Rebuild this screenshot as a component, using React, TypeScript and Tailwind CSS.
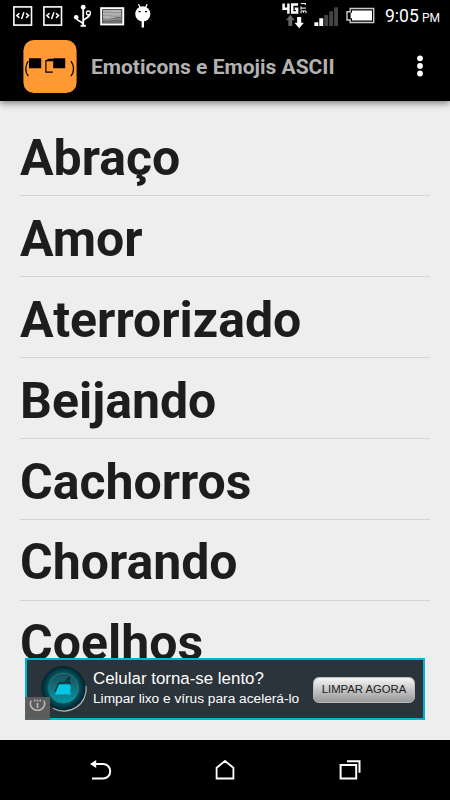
const categories = ['Abraço', 'Amor', 'Aterrorizado', 'Beijando', 'Cachorros', 'Chorando', 'Coelhos'];

function CodeIcon() {
  return (
    <svg width="20" height="20" viewBox="0 0 20 20" fill="none" stroke="#fff">
      <rect x=".9" y=".9" width="17.6" height="18.2" strokeWidth="1.6" />
      <path d="M6.4 7.2 3.8 9.6l2.6 2.3M13 7.2l2.6 2.4-2.6 2.3M10.9 6.2 8.6 13" strokeWidth="1.5" />
    </svg>
  );
}

function UsbIcon() {
  return (
    <svg width="20" height="24" viewBox="0 0 20 24" fill="none" stroke="#fff" strokeWidth="1.8">
      <path d="M10.2 3v18M10.2 20.5C9.5 16.5 3.7 18 3.2 13.5M10.2 17c.8-3 6.6-2.8 6.5-7" />
      <circle cx="10.2" cy="3.2" r="2.4" fill="#fff" stroke="none" />
      <circle cx="3.2" cy="13.2" r="2.3" fill="#fff" stroke="none" />
      <circle cx="15.4" cy="9" r="2" strokeWidth="1.3" />
      <path d="M7.6 21.8h5.2" strokeWidth="2" />
    </svg>
  );
}

function PictureIcon() {
  return (
    <svg width="25" height="19" viewBox="0 0 25 19" fill="none">
      <rect x="1.2" y="1.2" width="22" height="16.2" fill="#222" stroke="#fff" strokeWidth="2" />
      <rect x="3" y="3" width="18.4" height="12.6" fill="#b2b2b2" />
      <path d="M3 5.2c6-.8 12 1.8 18.4 0M3 8.4c6-.8 12 2.2 18.4.2" stroke="#888" strokeWidth=".8" />
      <path d="M3 11.2c7 2.4 12-2.4 18.4-.8v5.2H3z" fill="#6c6c6c" />
      <path d="M3 12.8c7 1 12-1.6 18.4-.8" stroke="#aaa" strokeWidth=".8" />
    </svg>
  );
}

function DroidIcon() {
  return (
    <svg width="16" height="24" viewBox="0 0 16 24" fill="#fff">
      <path d="M3.5.2 5.4 4M12.2.2 10.3 4" stroke="#fff" strokeWidth="1.3" />
      <circle cx="7.8" cy="9.8" r="7.6" />
      <path d="M6.6 17h2.4v6.2l-1.1.6-1.3-.6z" />
      <path d="M3.6 7.6h2M10 7.6h2" stroke="#000" strokeWidth="1.4" />
    </svg>
  );
}

function NetworkIcon() {
  return (
    <svg width="26" height="27" viewBox="0 0 26 27" fill="none">
      <path d="M1.6 1.4v5.4h6M6.4 1.4v10.4M16 2.5h-5.8v8.1h4.9V6.8h-2.4" stroke="#fff" strokeWidth="2.5" />
      <path d="M18.8 1.6h5.2M23.4 1v2M19 4.4v3.4M19 6.1h5M24 9h-5v2.3M21.5 9v1.8M24 9v2.3" stroke="#fff" strokeWidth="1" />
      <path d="m8.3 12.8 4.4 5.4h-2.5v5.7H6.4v-5.7H3.9z" fill="#666" />
      <path d="m17.2 26.3-4.7-5.6h2.6V15h4.1v5.7h2.7z" fill="#fff" />
    </svg>
  );
}

function SignalIcon() {
  return (
    <svg width="25" height="20" viewBox="0 0 25 20" fill="#444">
      <path d="M.4 15.2h3.9V19H.4zM5.3 11.2h3.9V19H5.3z" fill="#fff" />
      <path d="M10.3 8h3.8v11h-3.8zM15.2 4.2h3.9V19h-3.9zM20.1.2H24V19h-3.9z" />
    </svg>
  );
}

function BatteryIcon() {
  return (
    <svg width="29" height="17" viewBox="0 0 29 17" fill="none">
      <path d="M4.2 1.5h23.5v14H4.2V13H1V4.7h3.2z" stroke="#ccc" strokeWidth="1.4" />
      <path d="M6 3.5h20v10H6v-2.3H4.6V5.8H6z" fill="#fff" />
    </svg>
  );
}

function StatusBar() {
  return (
    <div className="flex h-[33px] shrink-0 items-start bg-black text-white">
      <div className="ml-[13px] mt-[6px]"><CodeIcon /></div>
      <div className="ml-[10px] mt-[6px]"><CodeIcon /></div>
      <div className="ml-[10px] mt-[4px]"><UsbIcon /></div>
      <div className="ml-[7px] mt-[7px]"><PictureIcon /></div>
      <div className="ml-[10px] mt-[4px]"><DroidIcon /></div>
      <div className="ml-auto mt-[2px]"><NetworkIcon /></div>
      <div className="ml-[6px] mt-[7px]"><SignalIcon /></div>
      <div className="ml-[7px] mt-[7px]"><BatteryIcon /></div>
      <div className="ml-[10px] mr-[10px] flex w-[55px] items-baseline justify-between whitespace-nowrap leading-[33px]">
        <span className="text-[17.5px]">9:05</span>
        <span className="text-[12px]">PM</span>
      </div>
    </div>
  );
}

function AppLogo() {
  return (
    <svg width="54" height="54" viewBox="0 0 54 54" fill="none" stroke="#000">
      <rect x=".4" y="0" width="53.2" height="53" rx="10.5" fill="#ff9933" stroke="none" />
      <path d="M5.3 21.2c-3.4 4.4-3.4 10.6 0 15M48 21.2c3.4 4.4 3.4 10.6 0 15" strokeWidth="1.3" />
      <path d="M6 18.3h12.2v10H6zM30.2 18.3h12v10h-12z" fill="#000" stroke="none" />
      <path d="M30.2 20.6h-7.3v11.6h7M25 20.6v-1.2h5.5" strokeWidth="1.2" />
    </svg>
  );
}

function AppBar() {
  return (
    <header className="z-10 flex h-[68px] shrink-0 items-center bg-black pl-[23px] shadow-[0_2px_7px_rgba(0,0,0,0.5)]">
      <AppLogo />
      <h1 className="ml-[14px] mt-[2px] whitespace-nowrap text-[21px] font-bold text-[#b2b2b2]">Emoticons e Emojis ASCII</h1>
      <svg className="mb-[2px] ml-auto mr-[27px]" width="6" height="22" viewBox="0 0 6 22" fill="#fff">
        <circle cx="3" cy="3.3" r="2.9" />
        <circle cx="3" cy="10.9" r="2.9" />
        <circle cx="3" cy="18.5" r="2.9" />
      </svg>
    </header>
  );
}

function CleanerIcon() {
  return (
    <svg width="48" height="48" viewBox="0 0 48 48">
      <defs>
        <radialGradient id="ring">
          <stop offset=".6" stopColor="#066470" />
          <stop offset="1" stopColor="#02222a" />
        </radialGradient>
        <linearGradient id="disc" x2="0" y2="1">
          <stop stopColor="#1b4e58" />
          <stop offset="1" stopColor="#0796a5" />
        </linearGradient>
      </defs>
      <path d="M45 21A22.3 22.3 0 0 1 12 43.3" fill="none" stroke="#aab7be" strokeWidth="1.2" />
      <circle cx="22.3" cy="23" r="22" fill="url(#ring)" />
      <circle cx="22.5" cy="23.2" r="15" fill="url(#disc)" stroke="#277c87" strokeWidth=".8" />
      <path d="M18 19.6h11l.9 3.4-1 2.6 1 4H25.6l-1.6-1.4.2 1.4H13.9c2-2.6 1.8-6.8 4.1-10z" fill="#08c5e5" />
      <path d="M13.6 26.5c2.6-2 2.3-7.2 4.8-8.6h5.2l4.8-6M28.4 12l-.6 4.4-1.6 1.3 3.6.7" fill="none" stroke="#06272f" strokeWidth="1.1" />
    </svg>
  );
}

function AdBanner() {
  return (
    <aside className="absolute left-[25px] top-[557px] flex h-[62px] w-[400px] items-center border-2 border-[#00b4d5] bg-[#2b333b] font-['Liberation_Sans',Arial,sans-serif] text-white">
      <div className="ml-[14px] shrink-0"><CleanerIcon /></div>
      <div className="ml-1 whitespace-nowrap">
        <div className="text-[16.9px] leading-[19.5px]">Celular torna-se lento?</div>
        <div className="text-[13.7px] leading-5">Limpar lixo e vírus para acelerá-lo</div>
      </div>
      <button className="ml-auto mr-2 mt-[1px] h-[26px] w-[102px] whitespace-nowrap rounded-[6px] border border-[#bbb] bg-linear-to-b from-[#f5f5f5] to-[#989898] text-[11.3px] text-[#202020]">
        LIMPAR AGORA
      </button>
      <div className="absolute -bottom-[2px] -left-[2px] h-[23px] w-[25px] bg-[#5e5e5e]/95">
        <svg width="25" height="23" viewBox="0 0 25 23" fill="none" stroke="#b5b5b5">
          <path d="M6 3.5c-2.2 5 1.4 9.8 6.5 9.8s8.7-4.8 6.5-9.8" strokeWidth="1.5" />
          <path d="M12.5 6v5M12.5 2.8v1.8M9 3.5h1.5M14.5 3.5H16" strokeWidth="1.8" />
        </svg>
      </div>
    </aside>
  );
}

function NavBar() {
  return (
    <nav className="flex h-[60px] shrink-0 items-center bg-black">
      <svg className="ml-[88px]" width="24" height="24" viewBox="0 0 24 24" fill="none" stroke="#fff" strokeWidth="2">
        <path d="M6 6h9c4 0 7.2 3 7.2 7.3s-3.2 7.2-7.2 7.2H4" />
        <path d="m2 6 6.2-4v8z" fill="#fff" stroke="none" />
      </svg>
      <svg className="ml-[101px]" width="24" height="24" viewBox="0 0 24 24" fill="none" stroke="#fff" strokeWidth="1.8">
        <path d="m12 3 8.4 6.8v10.7H3.6V9.8z" />
      </svg>
      <svg className="ml-[101px]" width="24" height="24" viewBox="0 0 24 24" fill="none" stroke="#fff" strokeWidth="2">
        <path d="M2.6 7h15.6v13.4H2.6zM9 3.2h12.5v11.6" />
      </svg>
    </nav>
  );
}

export default function App() {
  return (
    <div className="flex h-[800px] w-[450px] flex-col overflow-hidden bg-black font-[Roboto,sans-serif]">
      <StatusBar />
      <AppBar />
      <main className="relative min-h-0 flex-1 overflow-hidden bg-[#eeeeee] px-5 pt-[14.3px]">
        <ul>
          {categories.map((name) => (
            <li
              key={name}
              className="flex h-[80.9px] items-center whitespace-nowrap border-b border-[#d4d4d4] pt-[5.4px] text-[50px] font-bold leading-none text-[#1d1d1d] last:border-transparent"
            >
              {name}
            </li>
          ))}
        </ul>
        <AdBanner />
      </main>
      <NavBar />
    </div>
  );
}
